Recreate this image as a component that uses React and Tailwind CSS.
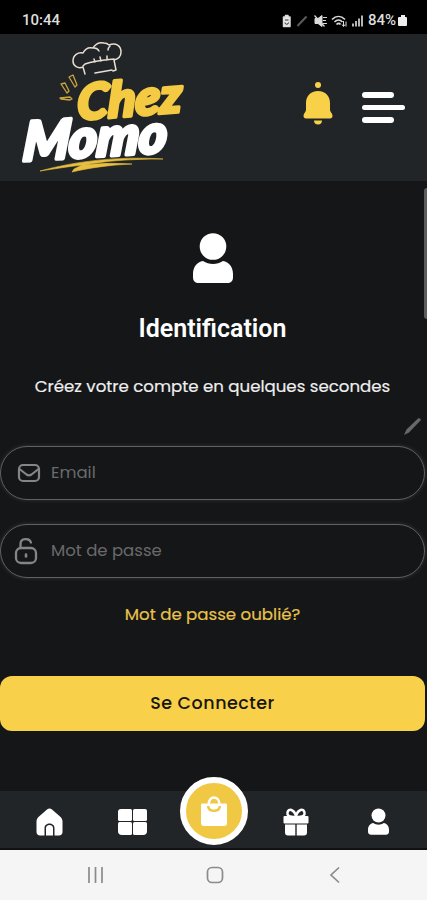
function StatusBar() {
  return (
    <div className="h-[34px] bg-black flex items-center justify-between pl-[22px] pr-5 pt-[7px] text-[#dedede] font-['Roboto',sans-serif]">
      <span className="text-[15px] font-medium leading-none">10:44</span>
      <div className="flex items-center">
        <svg width="86" height="14" viewBox="0 0 86 14" fill="none" stroke="#dcdcdc">
          <path d="M3.500 3h2V1.500h2.500V3h2v9.500h-6.500z" fill="#e8e8e8" strokeWidth="1.500" strokeLinejoin="round" />
          <path d="M5 6h3.500M5 8.500a1.700 1.700 0 0 0 3.500 0" stroke="#333" />
          <path d="M17.500 12l9-9.500" stroke="#5c5c5c" strokeWidth="2" />
          <path d="M35 4.500h3l4-3v11l-4-3h-3z" fill="#dcdcdc" />
          <path d="M34.500 1.500l10 11M43 3.500h4M43 6.500h3M43 9.500h4" strokeWidth="1.200" />
          <path d="M52 5.500c4-4 9-4 13 0M54.500 8c2.500-2.500 5.500-2.500 8 0M56.500 10.500c1.500-1.500 3-1.500 4 0" strokeWidth="1.600" />
          <path d="M63.500 7v5M66 7.500v5M62 10.500l1.500 2 1.500-2" />
          <path d="M73 9.500v3M76 7v5.500M79 4.500v8M82 1.500v11" stroke="#b5b5b5" strokeWidth="2" />
        </svg>
        <span className="ml-0.5 text-[15px] font-medium leading-none">84%</span>
        <span className="ml-0.5 w-[9px] flex flex-col items-center">
          <span className="w-1 h-0.5 bg-[#eee]" />
          <span className="w-[9px] h-[9px] bg-[#eee] rounded-[1px]" />
        </span>
      </div>
    </div>
  );
}

function Logo() {
  return (
    <svg width="170" height="136" viewBox="18 40 170 136" fill="none">
      <g stroke="#e8ddd1" strokeWidth="1.500" strokeLinecap="round" strokeLinejoin="round">
        <path d="M85 74l-2-7c-5 2-10-1-10-6 0-6 5-9 10-8 2-4 6-6 10-5 3-5 7-6 11-5 2 0 4 1 5 2 7-3 12 1 12 7 0 4-3 7-7 8l2 10-3 1M83 66l2-2c8-3 18-4 29-5M95 73l17-3M95 62l-1-3M101 61l-1-4M107 60v-4" />
        <path d="M94 48c2 0 4 1 5 3M110 46c-1 1-2 3-2 4" />
      </g>
      <g stroke="#c9a53e" strokeWidth="1.300" strokeLinejoin="round">
        <path d="M69 77l4-2 4 10-2 2zM61 84l4-1 4 8-2 2zM60 98l10-1 2 2-2 1-9-1z" />
      </g>
      <g transform="translate(78 120) rotate(-4.500) skewX(-6)" fontFamily="Lato, sans-serif" fontWeight="900" fontStyle="italic" strokeLinejoin="round">
        <text x="-1" y="0" fontSize="49" textLength="105" lengthAdjust="spacingAndGlyphs" fill="#f5ca43" stroke="#f5ca43" strokeWidth="3.400">Chez</text>
      </g>
      <g transform="translate(22 161) rotate(-3.500) skewX(-8)" fontFamily="Lato, sans-serif" fontWeight="900" fontStyle="italic" strokeLinejoin="round">
        <text x="0" y="0" fontSize="54" textLength="144" lengthAdjust="spacingAndGlyphs" fill="#fff" stroke="#fff" strokeWidth="3.800">Momo</text>
      </g>
      <path d="M40 171c36-10 79-15 123-12-33 0-59 2-78 6 16-2 31-2 47-1-23 1-43 4-60 8l2-3 8-4c-16 2-29 4-42 6z" fill="#e8bf3e" stroke="#e8bf3e" strokeWidth=".6" />
    </svg>
  );
}

function Header() {
  return (
    <header className="h-[147px] bg-[#212528] flex items-center justify-between pl-[18px] pr-[22px]">
      <Logo />
      <div className="flex items-center gap-[29px]">
        <svg className="mb-[9px]" width="30" height="44" viewBox="0 0 30 44" fill="#f8d149">
          <circle cx="15" cy="4" r="3" />
          <path d="M15 10c7.500 0 12 5 12 12v7c0 2 2.500 3 2.500 6 0 1.500-1 2.500-2.500 2.500H3C1.500 37.500.5 36.500.5 35c0-3 2.500-4 2.500-6v-7c0-7 4.500-12 12-12z" />
          <path d="M11 39.500h8c0 2.500-1.500 4-4 4s-4-1.500-4-4z" />
        </svg>
        <div className="w-[43px] flex flex-col gap-[7px]">
          <span className="h-[5.500px] w-[32px] rounded-full bg-white" />
          <span className="h-[5.500px] w-[43px] rounded-full bg-white" />
          <span className="h-[5.500px] w-[32px] rounded-full bg-white" />
        </div>
      </div>
    </header>
  );
}

function MailIcon() {
  return (
    <svg width="24" height="20" viewBox="0 0 24 20" fill="none" stroke="#858585" strokeWidth="2.200" strokeLinejoin="round">
      <rect x="2" y="2" width="20" height="16" rx="4" />
      <path d="M2.500 6l7 5.500c1.500 1 3.500 1 5 0l7-5.500" />
    </svg>
  );
}

function LockIcon() {
  return (
    <svg className="mr-1.5" width="24" height="28" viewBox="0 0 24 28" fill="none" stroke="#858585" strokeWidth="2.300" strokeLinecap="round">
      <rect x="2" y="11" width="20" height="15" rx="5" />
      <path d="M6.500 11V7c0-6 9-6.500 10.500-1.500" />
      <path d="M12 17.500v2" strokeWidth="2.600" />
    </svg>
  );
}

function Field({ icon, label, type }) {
  return (
    <label className="h-[54px] w-[425px] flex items-center rounded-full border border-[#606163] shadow-[0_0_4px_#34373a] pl-3">
      <span className="w-8 flex justify-center">{icon}</span>
      <input
        type={type}
        placeholder={label}
        className="ml-1.5 w-72 bg-transparent outline-none text-[16.500px] placeholder:text-[#6a6a6a]"
      />
    </label>
  );
}

function PersonIcon({ className }) {
  return (
    <svg className={className} viewBox="0 0 40 50" fill="#fff">
      <circle cx="20" cy="13.500" r="13.300" />
      <path d="M10 28c6 4 14 4 20 0 6 1 10 6 10 13v3c0 4-2 6-6 6H6c-4 0-6-2-6-6v-3c0-7 4-12 10-13z" />
    </svg>
  );
}

function BottomNav() {
  return (
    <nav className="relative h-[59px] bg-[#212528] border-b-2 border-[#111] flex items-center">
      <a className="w-[99px] flex justify-center pt-1">
        <svg width="27" height="28" viewBox="0 0 27 28" fill="#fff">
          <path d="M11 1.500c1.500-1.300 3.500-1.300 5 0l8 7c1.500 1.400 2.500 3 2.500 5V24c0 2-1.500 3.500-3.500 3.500h-4.500V20c0-6-10-6-10 0v7.500H4C2 27.500.5 26 .5 24V13.500c0-2 1-3.600 2.500-5z" />
          <path d="M10 27.500V20c0-4 7-4 7 0v7.500z" />
        </svg>
      </a>
      <a className="w-[66px] flex justify-center pt-1">
        <div className="grid grid-cols-2 gap-px">
          <span className="w-3.5 h-[12.500px] bg-white rounded-[1.500px] rounded-tl-[3px]" />
          <span className="w-3.5 h-[12.500px] bg-white rounded-[1.500px] rounded-tr-[2px]" />
          <span className="w-3.5 h-[12.500px] bg-white rounded-[1.500px] rounded-bl-[4px]" />
          <span className="w-3.5 h-[12.500px] bg-white rounded-[1.500px] rounded-br-[4px]" />
        </div>
      </a>
      <a className="absolute left-[180px] top-[-14px] size-[68px] rounded-full border-[6px] border-white bg-[#f0c843] flex items-center justify-center">
        <svg width="28" height="32" viewBox="0 0 28 32" fill="none">
          <path d="M2.500 8.500h23c1 0 1.500.5 1.500 1.500v18c0 2-1 3-3 3H4c-2 0-3-1-3-3V10c0-1 .5-1.500 1.500-1.500z" fill="#fff" />
          <path d="M8.500 10c0-10 11-10 11 0" stroke="#fff" strokeWidth="2.400" />
          <path d="M8 11c1 6.500 11 6.500 12 0" stroke="#f0c843" strokeWidth="2.400" />
        </svg>
      </a>
      <a className="ml-[98px] w-[66px] flex justify-center pt-1">
        <svg width="26" height="28" viewBox="0 0 26 28" fill="#fff">
          <rect x=".5" y="8" width="25" height="7.500" rx="1" />
          <path d="M2 16.500h10.300v11H5c-2 0-3-1-3-3zM13.700 16.500H24v8c0 2-1 3-3 3h-7.300z" />
          <path d="M13 9C5 9 4 7 4.500 4.500 5.500 0 11 1 13 8c2-7 7.500-8 8.500-3.500C22 7 21 9 13 9z" fill="none" stroke="#fff" strokeWidth="2.500" />
        </svg>
      </a>
      <a className="w-[98px] flex justify-center pt-1">
        <PersonIcon className="w-[21px] h-[27px]" />
      </a>
    </nav>
  );
}

function SystemNav() {
  return (
    <div className="h-[50px] bg-[#f5f5f5] flex items-center">
      <svg width="427" height="24" viewBox="0 0 427 24" fill="none" stroke="#8b8b8b" strokeWidth="1.700">
        <path d="M89 4v16M95.500 4v16M102 4v16" />
        <rect x="207.500" y="4.500" width="15" height="15" rx="4.500" />
        <path d="M339 4.500l-8 7.500 8 7.500" />
      </svg>
    </div>
  );
}

export default function App() {
  return (
    <div className="relative w-[427px] h-[900px] overflow-hidden flex flex-col bg-[#141618] font-['Poppins','Inter',sans-serif]">
      <StatusBar />
      <Header />
      <main className="flex-1 flex flex-col items-center w-[425px]">
        <PersonIcon className="mt-[52px] w-10 h-[50px]" />
        <h1 className="mt-[30px] text-white text-[25px] leading-8 font-semibold font-['Roboto',sans-serif]">Identification</h1>
        <p className="mt-[30px] text-[#efefef] text-[16.600px] leading-6 whitespace-nowrap [-webkit-text-stroke:0.2px]">Créez votre compte en quelques secondes</p>
        <div className="mt-[47px] flex flex-col gap-6">
          <Field icon={<MailIcon />} label="Email" type="email" />
          <Field icon={<LockIcon />} label="Mot de passe" type="password" />
        </div>
        <a className="mt-[25px] text-[#e9c34a] text-[16.600px] leading-6 whitespace-nowrap [-webkit-text-stroke:0.2px]">Mot de passe oublié?</a>
        <button className="mt-[49px] w-[425px] h-[55px] rounded-[12px] bg-[#f8d049] text-[#17150d] text-[17.500px] tracking-[0.5px] font-medium">Se Connecter</button>
      </main>
      <BottomNav />
      <SystemNav />
      <span className="absolute right-0 top-[188px] w-[3px] h-[131px] rounded-l bg-[#5b5d5f]" />
      <svg className="absolute left-[402px] top-[416px]" width="21" height="21" viewBox="0 0 21 21" fill="#686868">
        <path d="M2 19l2.500-5.500L16 2.500c1.500-1 3.500.5 2.500 2L7 16.500z" />
      </svg>
    </div>
  );
}
